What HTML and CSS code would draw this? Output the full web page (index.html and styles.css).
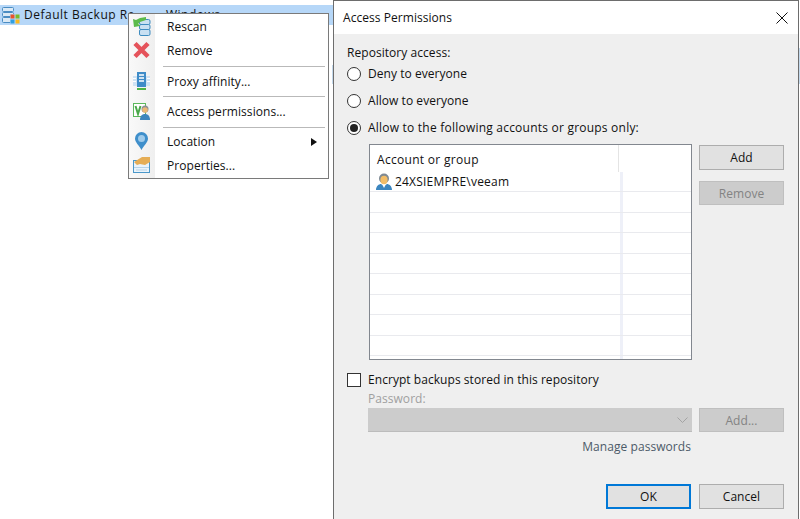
FILE: index.html
```html
<!DOCTYPE html>
<html lang="en">
<head>
<meta charset="utf-8">
<title>Access Permissions</title>
<link rel="stylesheet" href="styles.css">
</head>
<body>
<div class="desktop">
  <div class="row-selected">
    <svg class="row-icon" width="20" height="20" viewBox="0 0 20 20">
      <g fill="#dbe9f5" stroke="#4a8cc2"><rect x="1.500" y="2.500" width="11" height="4" rx="1"/><rect x="1.500" y="7.500" width="11" height="4" rx="1"/><rect x="1.500" y="12.500" width="11" height="5" rx="1"/></g>
      <rect x="9" y="9" width="5" height="5" fill="#b6d7f8"/><rect x="9" y="14" width="5" height="5" fill="#b6d7f8"/>
      <rect x="9.500" y="9.500" width="4" height="4" fill="#e8532b"/><rect x="14.500" y="9.500" width="4" height="4" fill="#7db928"/><rect x="9.500" y="14.500" width="4" height="4" fill="#2f9fe0"/><rect x="14.500" y="14.500" width="4" height="4" fill="#fbb81e"/>
    </svg>
    <span class="row-name">Default Backup Re</span>
    <span class="row-type">Windows</span>
  </div>
  <span class="edge edge-a"></span>
  <span class="edge edge-b"></span>

  <div class="menu">
    <div class="menu-item">
      <svg class="mi" width="20" height="22" viewBox="0 0 20 22"><g fill="#c9e0f2" stroke="#3f8cc0"><rect x="6.500" y="3.500" width="10.500" height="5" rx="1.500"/><rect x="6.500" y="8.500" width="10.500" height="5" rx="1.500"/><rect x="6.500" y="13.500" width="10.500" height="6" rx="1.500"/></g><path d="M0 3l3 1 4-2 6-1v3L7 6 5 8l2 1v1L1 11z" fill="#5cbb4b"/></svg>
      <span class="mt">Rescan</span>
    </div>
    <div class="menu-item">
      <svg class="mi" width="20" height="22" viewBox="0 0 20 22"><path d="M2 3.500l13 13M15 3.500l-13 13" stroke="#e5535b" stroke-width="4.500"/></svg>
      <span class="mt">Remove</span>
    </div>
    <div class="menu-sep"></div>
    <div class="menu-item">
      <svg class="mi" width="20" height="22" viewBox="0 0 20 22"><rect x="0" y="5" width="17" height="10" fill="#cfe3f4"/><rect x="4" y="1" width="9" height="15" fill="#3f8cc8"/><path d="M6 4h5M6 7h5M6 10h5" stroke="#fff" stroke-width="1.500"/><path d="M0 7.500h3M0 10.500h3M14 7.500h3M14 10.500h3" stroke="#fff"/><rect x="4" y="17" width="9" height="2" fill="#4fb548"/></svg>
      <span class="mt">Proxy affinity...</span>
    </div>
    <div class="menu-sep tight"></div>
    <div class="menu-item">
      <svg class="mi" width="20" height="22" viewBox="0 0 20 22"><rect x=".5" y="2.500" width="12" height="13" fill="#fff" stroke="#5cb85c"/><path d="M2.500 5l2.500 8 2.500-8" fill="none" stroke="#4aa84a" stroke-width="2"/><circle cx="12" cy="8" r="3.500" fill="#8b8f94"/><circle cx="12" cy="9" r="2.800" fill="#eab877"/><path d="M7 19c0-4 2-6 5-6s5 2 5 6z" fill="#3d86bd"/></svg>
      <span class="mt">Access permissions...</span>
    </div>
    <div class="menu-sep last"></div>
    <div class="menu-item">
      <svg class="mi" width="20" height="22" viewBox="0 0 20 22"><path d="M8.500 19C6 14 2 11.500 2 7.500a6.500 6.500 0 0 1 13 0C15 11.500 11 14 8.500 19z" fill="#3f8fcb"/><circle cx="8.500" cy="7.500" r="3.500" fill="#9fcbeb"/></svg>
      <span class="mt">Location</span>
      <span class="arrow"></span>
    </div>
    <div class="menu-item">
      <svg class="mi" width="20" height="22" viewBox="0 0 20 22"><rect x=".5" y="5.500" width="16" height="12" fill="#eaf3fa" stroke="#4a97c9"/><path d="M1 12.500h15M3 15h11" stroke="#b5d3e8"/><path d="M1 7l8-5h8v5l-5 3-5-1-3 1z" fill="#e5ad55"/></svg>
      <span class="mt">Properties...</span>
    </div>
  </div>

  <div class="dialog">
    <div class="titlebar">
      <span class="title">Access Permissions</span>
      <svg class="close" width="12" height="12" viewBox="0 0 12 12"><path d="M.5.500l11 11M11.500.500l-11 11" stroke="#111" fill="none"/></svg>
    </div>
    <div class="body">
      <div class="label">Repository access:</div>
      <div class="radio-row first"><span class="radio"></span><span>Deny to everyone</span></div>
      <div class="radio-row"><span class="radio"></span><span>Allow to everyone</span></div>
      <div class="radio-row"><span class="radio on"></span><span class="wide">Allow to the following accounts or groups only:</span></div>
      <div class="list-area">
        <div class="list">
          <div class="list-head"><span class="head-cell">Account or group</span></div>
          <div class="list-row user-row">
            <svg width="16" height="18" viewBox="0 0 16 18"><circle cx="8" cy="5.500" r="5" fill="#7f8a94"/><ellipse cx="8" cy="7" rx="3.600" ry="4.200" fill="#f2bd68"/><path d="M0 17c0-4 3-6 5-6l3 2 3-2c2 0 5 2 5 6z" fill="#3c86bf"/><path d="M6.500 12L8 15l1.500-3z" fill="#fff"/></svg>
            <span class="wide-user">24XSIEMPRE\veeam</span>
          </div>
          <div class="list-row"></div><div class="list-row"></div><div class="list-row"></div><div class="list-row"></div><div class="list-row"></div><div class="list-row"></div><div class="list-row"></div><div class="list-row"></div>
        </div>
        <div class="list-btns">
          <div class="btn">Add</div>
          <div class="btn off">Remove</div>
        </div>
      </div>
      <div class="check-row"><span class="check"></span><span>Encrypt backups stored in this repository</span></div>
      <div class="pw-label">Password:</div>
      <div class="pw-row">
        <div class="combo"><svg width="11" height="6" viewBox="0 0 11 6"><path d="M.5.500l5 5 5-5" fill="none" stroke="#a3a3a3"/></svg></div>
        <div class="btn off">Add...</div>
      </div>
      <div class="manage"><span>Manage passwords</span></div>
      <div class="footer">
        <div class="btn primary">OK</div>
        <div class="btn">Cancel</div>
      </div>
    </div>
  </div>
</div>
</body>
</html>
```
FILE: styles.css
```css
* { box-sizing: border-box; }
html, body { margin: 0; height: 100%; }
body { background: #fff; color: #111; font: 12px/16px "Open Sans", "Noto Sans", sans-serif; letter-spacing: .05px; overflow: hidden; }
.desktop { position: relative; width: 800px; height: 519px; overflow: hidden; padding-top: 5px; }

.row-selected { width: 333px; height: 20px; background: #b6d7f8; display: flex; align-items: center; }
.row-icon { flex: none; margin-left: 1px; }
.row-name { margin-left: 3px; width: 142px; white-space: nowrap; letter-spacing: .5px; }
.row-type { letter-spacing: .5px; }

.edge { position: absolute; width: 1px; background: #c4d9ec; }
.edge-a { left: 332px; top: 65px; height: 19px; }
.edge-b { left: 799px; top: 48px; height: 36px; }

.menu { position: absolute; left: 128px; top: 13px; width: 201px; height: 166px; padding: 1px; background: linear-gradient(90deg, #f9f9f9 0, #efefef 26px, #fff 26px); border: 1px solid #7a7a7a; }
.menu-item { height: 24px; display: flex; align-items: center; position: relative; }
.mi { flex: none; margin-left: 3px; }
.mt { margin-left: 14px; }
.arrow { position: absolute; left: 181px; top: 8px; border-left: 6px solid #111; border-top: 4px solid transparent; border-bottom: 4px solid transparent; }
.menu-sep { height: 7px; padding-top: 3px; margin-left: 33px; margin-right: 2px; }
.menu-sep.tight { height: 6px; padding-top: 2px; }
.menu-sep.last { height: 6px; padding-top: 3px; }
.menu-sep::before { content: ""; display: block; height: 1px; background: #b9b9b9; }

.dialog { position: absolute; left: 333px; top: 0; width: 466px; height: 519px; background: #efefef; border: 1px solid #6d6d6d; border-bottom: 0; display: flex; flex-direction: column; }
.titlebar { height: 33px; flex: none; background: #fff; display: flex; align-items: center; justify-content: space-between; padding: 0 10px 0 9px; }
.body { flex: 1; padding: 11px 14px 0 13px; display: flex; flex-direction: column; }
.label { height: 16px; }
.radio-row { display: flex; align-items: center; height: 27px; gap: 7px; }
.radio-row.first { margin-top: -1px; }
.radio { width: 14px; height: 14px; border: 1px solid #333; border-radius: 50%; background: #fff; flex: none; position: relative; }
.radio.on { display: flex; align-items: center; justify-content: center; }
.radio.on::before { content: ""; width: 8px; height: 8px; border-radius: 50%; background: #222; }
.wide { letter-spacing: .22px; }

.list-area { display: flex; gap: 7px; margin: 3px 0 0 22px; }
.list { width: 323px; height: 216px; background: #fff; border: 1px solid #82878f; overflow: hidden; background-image: linear-gradient(#eef0f8, #eef0f8); background-size: 3px 100%; background-position: 250px 0; background-repeat: no-repeat; }
.list-head { height: 27px; background: #fff; display: flex; }
.head-cell { width: 249px; padding: 7px 7px 0; border-right: 1px solid #e4e4e4; letter-spacing: .3px; }
.list-row { height: 20.500px; border-bottom: 1px solid #e9eaee; }
.user-row { display: flex; align-items: center; gap: 3px; padding: 1px 0 0 6px; height: 20px; }
.wide-user { letter-spacing: .2px; }
.list-btns { display: flex; flex-direction: column; gap: 11px; margin-top: 1px; }

.btn { width: 85px; height: 25px; background: #e1e1e1; border: 1px solid #adadad; display: flex; align-items: center; justify-content: center; flex: none; }
.btn.off { background: #ccc; border-color: #bfbfbf; color: #838383; height: 24px; padding-top: 1px; }
.btn.primary { border: 2px solid #0078d7; }

.check-row { display: flex; align-items: center; gap: 7px; height: 16px; margin: 12px 0 0; }
.check { width: 14px; height: 14px; border: 1px solid #333; background: #fff; flex: none; }
.pw-label { margin: 3px 0 0 21px; color: #a0a0a0; height: 16px; }
.pw-row { display: flex; gap: 7px; margin: 1px 0 0 21px; }
.combo { width: 324px; height: 24px; background: #ccc; border-bottom: 1px solid #bcbcbc; display: flex; align-items: center; justify-content: flex-end; padding-right: 4px; }
.manage { margin: 7px 93px 0 0; text-align: right; color: #4c5a68; height: 16px; letter-spacing: .06px; }
.footer { display: flex; gap: 8px; justify-content: flex-end; margin-top: 29px; }
.footer .btn { padding-top: 1px; }
```
